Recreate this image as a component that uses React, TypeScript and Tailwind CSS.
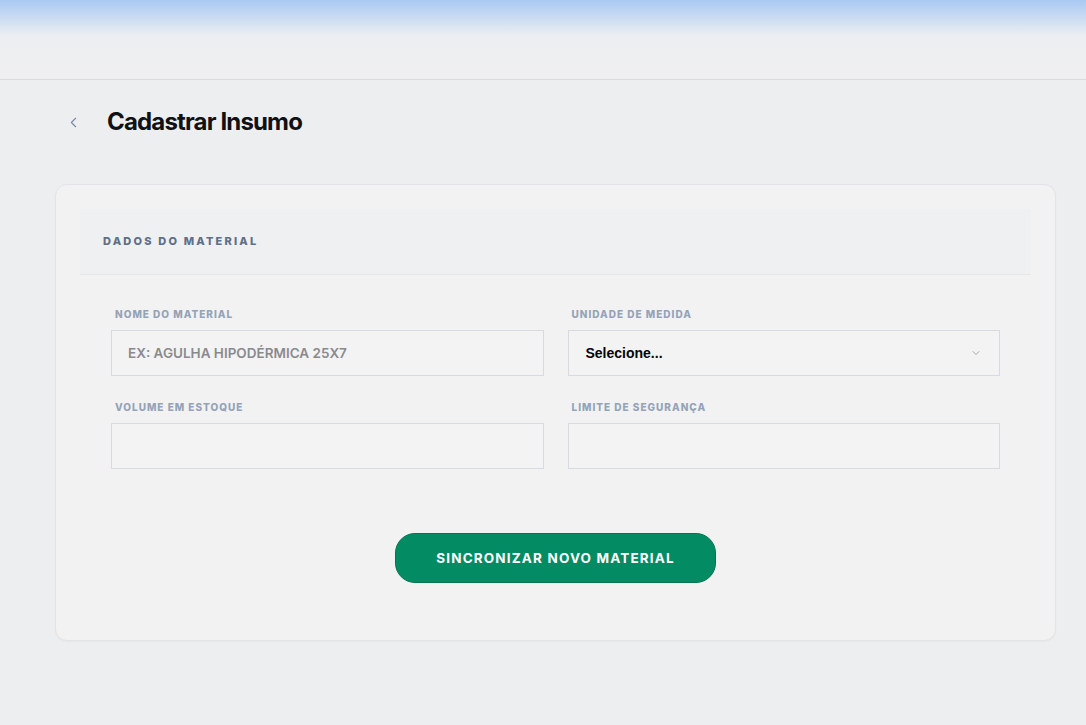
import { ChevronLeft, ChevronDown } from 'lucide-react';

const font = { fontFamily: 'Inter, "Liberation Sans", sans-serif' };

function Field({ label, children }: { label: string; children: React.ReactNode }) {
  return (
    <div className="flex flex-col">
      <label className="text-[10px] leading-[12px] font-extrabold uppercase tracking-[0.1em] text-[#94a3b8] pl-1 mb-[10px]">
        {label}
      </label>
      {children}
    </div>
  );
}

export default function App() {
  return (
    <div className="min-h-[725px] bg-[#edeef0] text-[#111827]" style={font}>
      {/* Header */}
      <header className="h-[80px] border-b border-[#d9dadc] bg-gradient-to-b from-[#a9c9f2] via-[#eceef1] via-[45%] to-[#efeff0]" />

      <main className="pl-[55px] pr-[30px] pt-[22px] pb-10">
        {/* Title row */}
        <div className="flex items-center h-[40px] mb-[42px]">
          <button className="w-[36px] h-[36px] flex items-center justify-center text-[#7b8aa0]">
            <ChevronLeft className="w-[17px] h-[17px]" strokeWidth={1.6} />
          </button>
          <h1 className="ml-[16px] text-[24px] font-bold tracking-[-0.035em] text-[#0f1115]">Cadastrar Insumo</h1>
        </div>

        {/* Card */}
        <section className="bg-[#f2f2f2] border border-[#e2e4e7] rounded-[12px] p-6 shadow-[0_1px_2px_rgba(0,0,0,0.03)]">
          <div className="h-[66px] bg-[#eff0f1] border-b border-[#e4e6ea] flex items-center pl-[23px]">
            <h2 className="text-[11px] font-extrabold uppercase tracking-[0.2em] text-[#5d6f89]">Dados do Material</h2>
          </div>

          <div className="px-[31px] pt-[33px] pb-[33px]">
            <div className="grid grid-cols-2 gap-x-6 gap-y-[25px]">
              <Field label="Nome do Material">
                <input
                  className="h-[46px] border border-[#d6dae1] bg-[#f3f3f3] px-[16px] text-[13.5px] font-semibold outline-none placeholder:text-[#8a8a8e]"
                  placeholder="EX: AGULHA HIPODÉRMICA 25X7"
                />
              </Field>
              <Field label="Unidade de Medida">
                <div className="h-[46px] border border-[#d6dae1] bg-[#f3f3f3] pl-[17px] pr-[17px] flex items-center justify-between">
                  <span className="text-[14px] font-semibold text-[#050505]" style={{ fontFamily: '"Liberation Sans", Arial, sans-serif' }}>
                    Selecione...
                  </span>
                  <ChevronDown className="w-[12px] h-[12px] text-[#8d8f94]" strokeWidth={1.5} />
                </div>
              </Field>
              <Field label="Volume em Estoque">
                <input className="h-[46px] border border-[#d6dae1] bg-[#f3f3f3] px-[15px] text-[14px] outline-none" />
              </Field>
              <Field label="Limite de Segurança">
                <input className="h-[46px] border border-[#d6dae1] bg-[#f3f3f3] px-[15px] text-[14px] outline-none" />
              </Field>
            </div>

            <div className="flex justify-center mt-[64px]">
              <button className="w-[321px] h-[50px] rounded-[20px] bg-[#038c63] border border-[#04754f] text-white text-[13.5px] font-bold uppercase tracking-[0.085em]">
                Sincronizar Novo Material
              </button>
            </div>
          </div>
        </section>
      </main>
    </div>
  );
}
